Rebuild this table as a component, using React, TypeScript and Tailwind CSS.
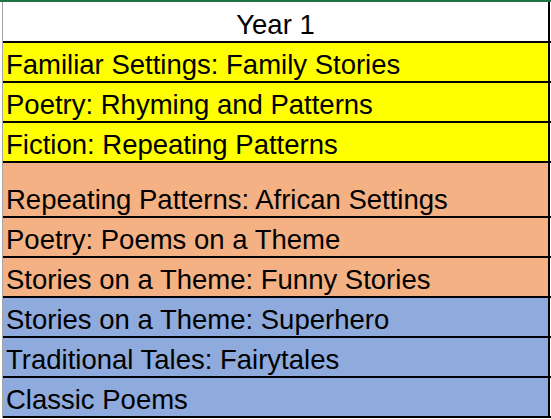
import React from 'react';

type Row = { label: string; color: string; tall?: boolean };

const ROWS: Row[] = [
  { label: 'Familiar Settings: Family Stories', color: 'bg-[#ffff00]' },
  { label: 'Poetry: Rhyming and Patterns', color: 'bg-[#ffff00]' },
  { label: 'Fiction: Repeating Patterns', color: 'bg-[#ffff00]' },
  { label: 'Repeating Patterns: African Settings', color: 'bg-[#f4b183]', tall: true },
  { label: 'Poetry: Poems on a Theme', color: 'bg-[#f4b183]' },
  { label: 'Stories on a Theme: Funny Stories', color: 'bg-[#f4b183]' },
  { label: 'Stories on a Theme: Superhero', color: 'bg-[#8faadc]' },
  { label: 'Traditional Tales: Fairytales', color: 'bg-[#8faadc]' },
  { label: 'Classic Poems', color: 'bg-[#8faadc]' },
];

const App: React.FC = () => {
  return (
    <div className="w-[551px] h-[419px] bg-white text-black font-['Liberation_Sans',Arial,sans-serif] text-[27.5px] leading-[30px] overflow-hidden">
      {/* selection edge */}
      <div className="h-[2px] bg-[#217346]" />

      <div className="flex">
        <div className="w-[2px]" />
        <div className="w-px bg-[#a6a6a6]" />

        <div className="flex-1 flex flex-col">
          {/* Header */}
          <div className="flex h-[41px] border-b-2 border-black">
            <div className="w-[547px] border-r-2 border-black bg-white flex items-end justify-center pb-[1px]">
              Year 1
            </div>
            <div className="flex-1" />
          </div>

          {ROWS.map((row) => (
            <div
              key={row.label}
              className={`flex border-b-2 border-black ${row.tall ? 'h-[55px]' : 'h-[40px]'}`}
            >
              <div className={`w-[547px] border-r-2 border-black ${row.color} flex items-end pl-[3px] pb-[1px]`}>
                {row.label}
              </div>
              <div className="flex-1" />
            </div>
          ))}
        </div>
      </div>
    </div>
  );
};

export default App;
